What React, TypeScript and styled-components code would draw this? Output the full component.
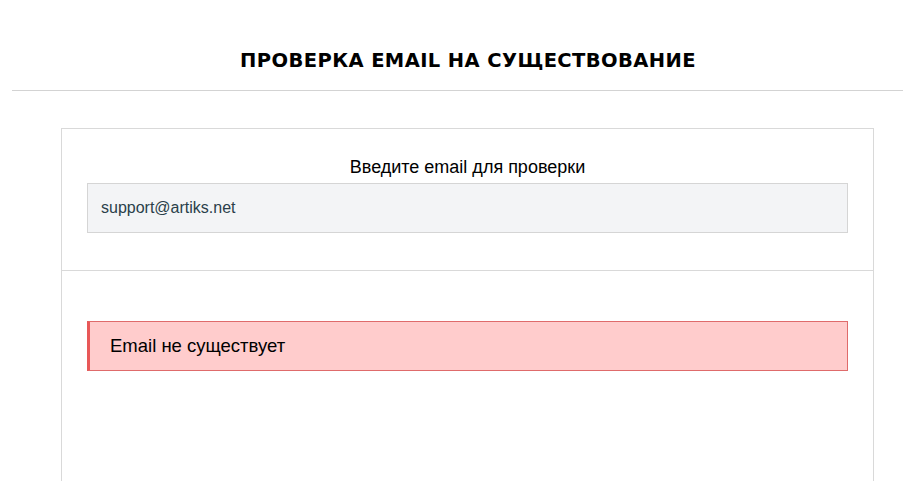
import React from 'react'
import styled, { createGlobalStyle } from 'styled-components'

const GlobalStyle = createGlobalStyle`
  html, body {
    margin: 0;
    padding: 0;
    background: #fff;
  }
  body {
    font-family: "Liberation Sans", Arial, sans-serif;
    color: #000;
  }
`

const Page = styled.div`
  width: 903px;
  height: 481px;
  overflow: hidden;
`

const Header = styled.div`
  height: 91px;
  display: flex;
  align-items: flex-end;
  justify-content: center;
  border-bottom: 1px solid #d3d3d3;
  margin-left: 12px;
  padding-left: 21px;
  box-sizing: border-box;
`

const Title = styled.h1`
  margin: 0 0 18px 0;
  font-family: "DejaVu Sans", Verdana, sans-serif;
  font-size: 19.5px;
  font-weight: bold;
  line-height: 22px;
  letter-spacing: 0.4px;
`

const Card = styled.div`
  margin: 37px 0 0 61px;
  width: 813px;
  box-sizing: border-box;
  border: 1px solid #d9d9d9;
  border-bottom: none;
`

const Section = styled.div<{ $top: number; $bottom: number; $divider?: boolean }>`
  padding: ${p => p.$top}px 25px ${p => p.$bottom}px;
  border-bottom: ${p => (p.$divider ? '1px solid #d9d9d9' : 'none')};
`

const Label = styled.div`
  text-align: center;
  font-size: 18px;
  line-height: 20px;
  margin-bottom: 6px;
`

const Input = styled.input`
  display: block;
  width: 100%;
  height: 50px;
  box-sizing: border-box;
  border: 1px solid #d5d5d5;
  background: #f3f4f6;
  padding: 0 13px;
  font-family: "Liberation Sans", Arial, sans-serif;
  font-size: 16px;
  color: #2a3f4a;
  outline: none;
`

const Alert = styled.div`
  height: 50px;
  box-sizing: border-box;
  display: flex;
  align-items: center;
  padding-left: 20px;
  background: #ffcccc;
  border: 1px solid #df6b6b;
  border-left: 3px solid #e85858;
  font-size: 18.5px;
`

export default function App() {
  return (
    <Page>
      <GlobalStyle />
      <Header>
        <Title>ПРОВЕРКА EMAIL НА СУЩЕСТВОВАНИЕ</Title>
      </Header>
      <Card>
        <Section $top={28} $bottom={37} $divider>
          <Label>Введите email для проверки</Label>
          <Input defaultValue="support@artiks.net" />
        </Section>
        <Section $top={50} $bottom={120}>
          <Alert>Email не существует</Alert>
        </Section>
      </Card>
    </Page>
  )
}
